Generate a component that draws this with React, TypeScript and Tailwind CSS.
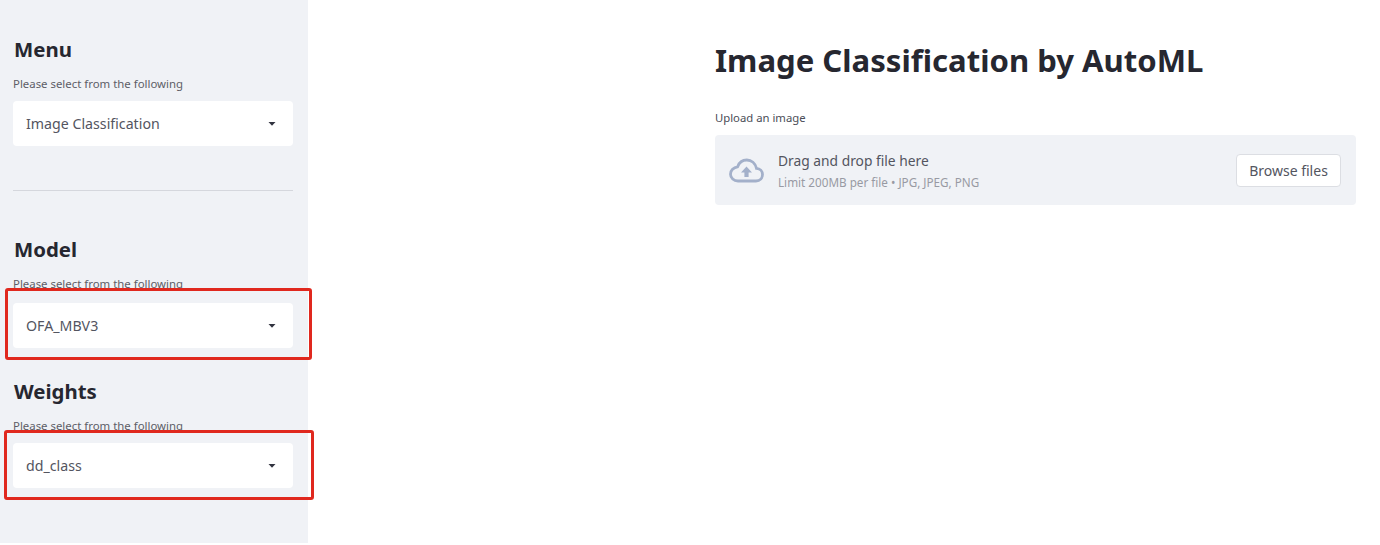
import React from "react";

function Caret() {
  return (
    <svg width="8" height="4" viewBox="0 0 8 4" className="shrink-0">
      <path d="M0.5 0 L7.5 0 L4 3.8 Z" fill="#31333f" />
    </svg>
  );
}

function Select({ value }: { value: string }) {
  return (
    <div className="flex h-[45px] items-center justify-between rounded-[4px] bg-white pl-[13px] pr-[17px] text-[14.2px] text-[#53555f]">
      <span>{value}</span>
      <Caret />
    </div>
  );
}

function Section({ title, value, className, labelClass }: { title: string; value: string; className?: string; labelClass: string }) {
  return (
    <section className={className}>
      <h2 className="ml-px text-[20.400px] font-bold leading-[28px] text-[#262730]">{title}</h2>
      <p className={`mt-[13px] text-[11.400px] leading-[16px] text-[#5d5e67] ${labelClass}`}>Please select from the following</p>
      <Select value={value} />
    </section>
  );
}

function RedBox({ className }: { className: string }) {
  return <div className={`absolute rounded-[3px] border-[3px] border-[#e0281e] ${className}`} />;
}

export default function App() {
  return (
    <div className="relative flex h-[545px] w-[1380px] overflow-hidden bg-white font-['Noto_Sans',sans-serif]">
      <aside className="h-[543px] w-[308px] shrink-0 bg-[#f0f2f6] pl-[13px] pr-[15px] pt-[35px]">
        <Section title="Menu" value="Image Classification" labelClass="mb-[9px]" />
        <hr className="mt-[44px] border-0 border-t border-[#d5d7dd]" />
        <Section title="Model" value="OFA_MBV3" className="mt-[44px]" labelClass="mb-[11px]" />
        <Section title="Weights" value="dd_class" className="mt-[29px]" labelClass="mb-[9px]" />
      </aside>
      <main className="flex-1 pl-[407px] pr-[24px] pt-[40px]">
        <h1 className="text-[31.100px] font-bold leading-[40px] text-[#262730]">Image Classification by AutoML</h1>
        <p className="mt-[30px] text-[11.300px] leading-[16px] text-[#4b4d57]">Upload an image</p>
        <div className="mt-[9px] flex h-[70px] items-center justify-between rounded-[4px] bg-[#f0f2f6] pl-[14px] pr-[15px]">
          <div className="flex items-center gap-[14px]">
            <svg width="35" height="25" viewBox="0 0 35 25" fill="none">
              <path
                d="M9 23 H27 C31 23 33.5 20 33.5 16.5 C33.5 13 31 10.500 27.500 10.300 C26.300 5.300 22.500 2 17.800 2 C13.500 2 10 4.800 8.600 8.800 C4.500 9.300 1.500 12.500 1.500 16.200 C1.500 20 4.800 23 9 23 Z"
                stroke="#a3b0ca"
                strokeWidth="2.800"
              />
              <path d="M17.500 8.500 L23 14.500 H19.600 V19 H15.400 V14.500 H12 Z" fill="#a3b0ca" />
            </svg>
            <div>
              <div className="mt-px text-[13.800px] leading-[20px] text-[#53555f]">Drag and drop file here</div>
              <div className="mt-[3px] text-[11.700px] leading-[16px] text-[#989aa3]">Limit 200MB per file • JPG, JPEG, PNG</div>
            </div>
          </div>
          <button className="flex h-[33px] w-[105px] items-center justify-center rounded-[4px] border border-[#dcdee3] bg-white text-[14px] text-[#53555f]">
            Browse files
          </button>
        </div>
      </main>
      <RedBox className="left-[5px] top-[288px] h-[72px] w-[307px]" />
      <RedBox className="left-[4px] top-[430px] h-[70px] w-[310px]" />
    </div>
  );
}
